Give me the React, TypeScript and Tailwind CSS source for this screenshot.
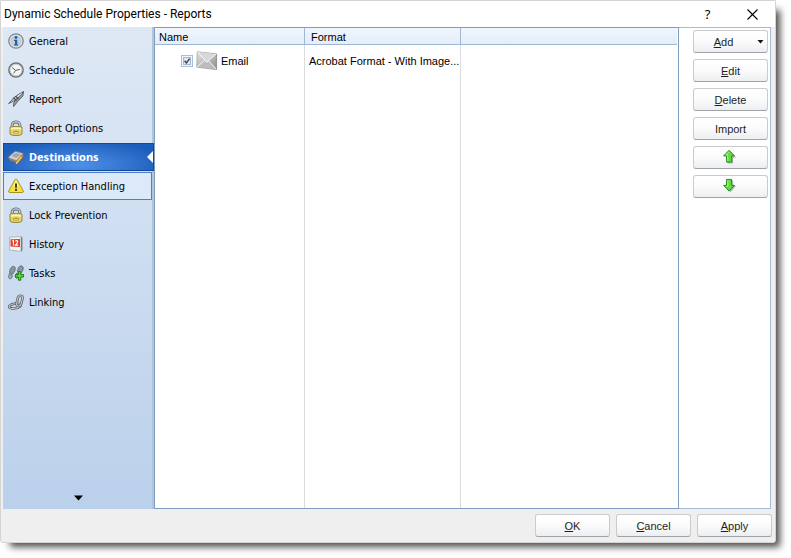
import { useState } from 'react'
import type { ReactNode } from 'react'

type NavItem = {
    id: string
    label: string
    icon: ReactNode
}

function InfoIcon() {
    return (
        <svg width="16" height="16" viewBox="0 0 16 16">
            <circle cx="8" cy="8" r="7.2" fill="#dfe6ec" stroke="#7d8890" strokeWidth="1.3" />
            <circle cx="8" cy="8" r="5.7" fill="#c3ced8" />
            <circle cx="8" cy="4.5" r="1.4" fill="#1d5f9c" />
            <path d="M6 6.8h3.2v4.6h1.1v1.2H5.9v-1.2H7V8H6z" fill="#1d5f9c" />
        </svg>
    )
}

function ClockIcon() {
    return (
        <svg width="16" height="16" viewBox="0 0 16 16">
            <circle cx="8" cy="8" r="7.1" fill="#f6f7f7" stroke="#6d7275" strokeWidth="1.5" />
            <circle cx="8" cy="8" r="5.8" fill="none" stroke="#c5c9cc" />
            <path d="M4.2 5.6L7.6 8.4M7.6 8.4L11.8 7.4M7.6 8.4L5.6 11.4" stroke="#5a5a5a" strokeWidth="1" fill="none" />
        </svg>
    )
}

function PensIcon() {
    return (
        <svg width="16" height="16" viewBox="0 0 16 16">
            <path d="M15.5.6L14.9 5 9.6 10.4 5.6 15.6 5.9 11.4 9 7z" fill="#9aa2a7" stroke="#51585d" strokeWidth=".9" />
            <path d="M15.5.6L11 3 6 6.6.6 12.6 5.8 10 10.8 6.2z" fill="#c5cbcf" stroke="#51585d" strokeWidth=".9" />
            <path d="M5.2 6.6l3.4 3M7.4 5.2l3.2 2.8" stroke="#3b4246" strokeWidth="1.1" />
            <path d="M13.6 2.2l-4 3.4" stroke="#f4f6f7" strokeWidth=".8" />
        </svg>
    )
}

function LockIcon() {
    return (
        <svg width="16" height="16" viewBox="0 0 16 16">
            <path d="M4.2 8V5C4.2 .9 11.8 .9 11.8 5v3" fill="none" stroke="#6b7278" strokeWidth="3" />
            <path d="M4.2 8V5C4.2 .9 11.8 .9 11.8 5v3" fill="none" stroke="#c9ced2" strokeWidth="1.3" />
            <path d="M2 7q6-1.4 12 0v7q-1 1.6-6 1.6T2 14z" fill="#e6d467" stroke="#8d7d35" strokeWidth=".9" />
            <path d="M2.8 7.8q5.2-1.2 10.4 0v2q-5.2-1-10.4 0z" fill="#f8f0b4" />
            <ellipse cx="8" cy="12.2" rx="3" ry="1.6" fill="#b09c42" />
            <path d="M6 12.4q2 1.3 4 0" stroke="#f7edae" fill="none" strokeWidth=".8" />
        </svg>
    )
}

function DriveIcon() {
    return (
        <svg width="16" height="16" viewBox="0 0 16 16">
            <path d="M.5 8.2v2.4q.4.9 1.4 1.3l6 2.2q1 .3 1.8-.5l5.6-5.4V5.4z" fill="#7c7f82" stroke="#55585b" strokeWidth=".6" />
            <path d="M1.2 7.4L6.4 3q.8-.7 1.8-.5l6.2 1.7q1.3.4.5 1.4L9.4 11q-.8.7-1.8.4L1.3 9Q-.1 8.4 1.2 7.4z" fill="#cdcfd1" stroke="#85888b" strokeWidth=".7" />
            <path d="M4.2 6.6l3-2.4q.5-.3 1-.2l3.6 1q.6.3.2.7L9 8.5q-.4.3-1 .2L4.4 7.4q-.6-.3-.2-.8z" fill="#a3a6a9" />
            <path d="M13.6 5.8l1.9 1.5-5 6.2-2.7 1.6.8-3z" fill="#f8c63e" stroke="#a06c18" strokeWidth=".7" />
            <path d="M8.4 12.7l1.4 1.2-2 1.2z" fill="#fbeccb" />
            <path d="M13.6 5.8l1.9 1.5-1 1.2-1.9-1.5z" fill="#d8665a" />
        </svg>
    )
}

function WarningIcon() {
    return (
        <svg width="16" height="16" viewBox="0 0 16 16">
            <path d="M8 1.3q.8 0 1.3.9l5.9 10.6q.7 1.7-1 1.7H1.8q-1.7 0-1-1.7L6.7 2.2Q7.2 1.3 8 1.3z" fill="#f8e13c" stroke="#a8921b" />
            <path d="M8 2.6L4.4 9q3.6-2.2 7.2 0z" fill="#fdf6a6" />
            <path d="M7 5.4h2l-.4 4.8H7.4z" fill="#222" />
            <rect x="7.1" y="11" width="1.8" height="1.8" fill="#222" />
        </svg>
    )
}

function CalendarIcon() {
    return (
        <svg width="16" height="16" viewBox="0 0 16 16">
            <path d="M1.6 1.2L13 .6v14.8L1.6 14z" fill="#f4f5f6" stroke="#a3a8ad" strokeWidth=".8" />
            <path d="M13 .6l1.4.9v12.8L13 15.4z" fill="#777c81" />
            <path d="M2.6 3.2l9.4-.3v8l-9.4-.4z" fill="#df3a26" />
            <path d="M4.3 5.3l1.1-.7v4.8M7.3 5.4q1.6-1.5 2.5 0 0 1-2.5 3.7h3" fill="none" stroke="#fff" strokeWidth="1.1" />
        </svg>
    )
}

function StepsIcon() {
    return (
        <svg width="16" height="16" viewBox="0 0 16 16">
            <path d="M5.8 1.2q2.2.8 1.2 4.2L4.8 9 1.6 7.4Q2 1.5 5.8 1.2z" fill="#8c979f" stroke="#56616a" strokeWidth=".8" />
            <path d="M1.4 8.4l2.9 1.6q-.2 4-2.6 3.9Q-.4 13 1.4 8.4z" fill="#a6b0b7" stroke="#56616a" strokeWidth=".8" />
            <path d="M13.6.8q2.4.8 1.4 4.2L12.8 8.4 9.4 6.8Q9.8 1.1 13.6.8z" fill="#8c979f" stroke="#56616a" strokeWidth=".8" />
            <path d="M8.8 8l2.2 1.4q-.3 4-2.6 4-2-.9.4-5.4z" fill="#a6b0b7" stroke="#56616a" strokeWidth=".8" />
            <path d="M10.4 6.6h2.4v3h3V12h-3v3.2h-2.4V12h-3V9.6h3z" fill="#62d644" stroke="#1c7f12" strokeWidth="1" />
        </svg>
    )
}

function ChainIcon() {
    return (
        <svg width="16" height="16" viewBox="0 0 16 16" fill="none">
            <ellipse cx="6.8" cy="12" rx="5.6" ry="2.3" transform="rotate(-10 6.8 12)" stroke="#5d6368" strokeWidth="2.6" />
            <ellipse cx="6.8" cy="12" rx="5.6" ry="2.3" transform="rotate(-10 6.8 12)" stroke="#c9cdd0" strokeWidth="1" />
            <rect x="9.2" y="1.6" width="4.6" height="10.4" rx="2.3" transform="rotate(14 11.3 7)" stroke="#5d6368" strokeWidth="2.6" />
            <rect x="9.2" y="1.6" width="4.6" height="10.4" rx="2.3" transform="rotate(14 11.3 7)" stroke="#c9cdd0" strokeWidth="1" />
        </svg>
    )
}

function MailIcon() {
    return (
        <svg width="22" height="20" viewBox="0 0 22 20">
            <defs>
                <linearGradient id="mail" x1="0" y1="0" x2="1" y2="1">
                    <stop offset="0" stopColor="#e4e4e4" />
                    <stop offset="1" stopColor="#8f8f92" />
                </linearGradient>
            </defs>
            <path d="M1.2.8l19.2 2v15.8L.8 16.2z" fill="url(#mail)" stroke="#a0a0a2" strokeWidth=".8" />
            <path d="M1.6 1l18.6 2L10.8 11z" fill="#d8d8d9" />
            <path d="M1.2 16l7.6-6.6 2 1.6 1.8-1.3 7.6 8.4z" fill="#bcbcbe" />
            <path d="M1.6 1l9 10.2 9.6-8.2M1.2 16l7.4-6.8M12.6 10l7.6 8" fill="none" stroke="#fafafa" strokeWidth="1" />
            <path d="M20.6 3v15.6" stroke="#8d8d90" strokeWidth=".8" />
        </svg>
    )
}

function ArrowIcon({ down }: { down?: boolean }) {
    return (
        <svg className="mr-[2px] mb-[2px]" width="14" height="16" viewBox="0 0 14 16">
            <path
                d={down ? 'M4.2 2.4h6v5.4h3L7.6 14.6 2 8.6z' : 'M7 2.4l6.2 6.4h-3v5.8H4.6v-6z'}
                fill="#8d9296"
                opacity=".6"
            />
            <path
                d={down ? 'M3.6 1.4h5v6h2.9L6.1 13.1.7 7.4h2.9z' : 'M6.1 1.3l5.5 5.6H8.7v6.2H3.6V6.9H.6z'}
                fill="#5fdd3a"
                stroke="#258a1d"
                strokeWidth="1"
            />
            <path d={down ? 'M4.8 2.4v6h-1.6' : 'M6.1 2.8L2.9 6h1.8v6'} fill="none" stroke="#b6f59b" strokeWidth=".9" />
        </svg>
    )
}

const navItems: NavItem[] = [
    { id: 'general', label: 'General', icon: <InfoIcon /> },
    { id: 'schedule', label: 'Schedule', icon: <ClockIcon /> },
    { id: 'report', label: 'Report', icon: <PensIcon /> },
    { id: 'options', label: 'Report Options', icon: <LockIcon /> },
    { id: 'destinations', label: 'Destinations', icon: <DriveIcon /> },
    { id: 'exception', label: 'Exception Handling', icon: <WarningIcon /> },
    { id: 'lock', label: 'Lock Prevention', icon: <LockIcon /> },
    { id: 'history', label: 'History', icon: <CalendarIcon /> },
    { id: 'tasks', label: 'Tasks', icon: <StepsIcon /> },
    { id: 'linking', label: 'Linking', icon: <ChainIcon /> },
]

type PushButtonProps = {
    children: ReactNode
    label?: string
    onClick?: () => void
}

function PushButton({ children, label, onClick }: PushButtonProps) {
    return (
        <button
            type="button"
            aria-label={label}
            onClick={onClick}
            className="flex h-[23px] w-[75px] shrink-0 items-center justify-center rounded-[3px] border border-[#c9cbce] border-b-[#9fa2a6] bg-linear-to-b from-white via-[#fbfbfc] to-[#eceef1] text-[#1e1e1e]"
        >
            {children}
        </button>
    )
}

export default function App() {
    const [active, setActive] = useState('destinations')
    const [checked, setChecked] = useState(true)

    return (
        <div className="flex min-h-screen bg-white pr-[15px] pb-[15px] font-['Liberation_Sans',Arial,sans-serif] text-[11px] leading-4 text-black">
            <div className="flex flex-1 flex-col rounded-b-[3px] border border-[#d4d4d4] bg-[#efefef] shadow-[7px_7px_7px_-3px_rgba(0,0,0,0.7)]">
                {/* Title bar */}
                <header className="flex h-[26px] items-center bg-white pl-[3px] font-['Roboto','Open_Sans',sans-serif]">
                    <h1 className="flex-1 text-[12px]">Dynamic Schedule Properties - Reports</h1>
                    <button type="button" aria-label="Help" className="w-[45px] font-['Noto_Sans',sans-serif] text-[13px]">?</button>
                    <button type="button" aria-label="Close" className="flex w-[45px] justify-center">
                        <svg width="11" height="11" viewBox="0 0 11 11">
                            <path d="M.5.5l10 10M10.5.5l-10 10" stroke="#000" strokeWidth="1.1" />
                        </svg>
                    </button>
                </header>

                <main className="flex flex-1 pr-[4px] pl-[2px]">
                    {/* Navigation */}
                    <nav className="flex w-[151px] shrink-0 flex-col border-r-2 border-[#b3c5db] bg-linear-to-b from-[#dfe9f5] to-[#bad0eb] font-['DejaVu_Sans_Condensed','Noto_Sans',sans-serif]">
                        {navItems.map((item) => {
                            const isActive = item.id === active
                            return (
                                <button
                                    key={item.id}
                                    type="button"
                                    onClick={() => setActive(item.id)}
                                    className={
                                        isActive
                                            ? 'relative -mr-[2px] mb-px flex h-[28px] items-center gap-[5px] border border-[#14489b] bg-[radial-gradient(ellipse_at_50%_80%,#4f90e8,#1b5dba_85%)] pl-[4px] font-["Noto_Sans",sans-serif] font-bold text-white'
                                            : item.id === 'exception'
                                              ? 'mb-px flex h-[28px] items-center gap-[5px] border border-[#4c7fd0] bg-[#dce9f9] pl-[4px]'
                                              : 'mb-px flex h-[28px] items-center gap-[5px] border border-transparent pl-[4px]'
                                    }
                                >
                                    {item.icon}
                                    <span className={isActive ? 'whitespace-nowrap' : 'pt-[2px] whitespace-nowrap'}>{item.label}</span>
                                    {isActive && (
                                        <svg className="absolute top-[7px] right-0" width="6" height="12" viewBox="0 0 6 12">
                                            <path d="M6 0v12L0 6z" fill="#fff" />
                                        </svg>
                                    )}
                                </button>
                            )
                        })}
                        <button type="button" aria-label="More" className="mt-auto mb-[8px] flex justify-center pl-[2px]">
                            <svg width="9" height="6" viewBox="0 0 9 6">
                                <path d="M0 .5h9L4.5 5.5z" fill="#000" />
                            </svg>
                        </button>
                    </nav>

                    {/* Destinations list */}
                    <section className="flex flex-1 border border-[#7f9dbf] bg-white pr-px">
                        <table className="w-full table-fixed border-separate border-spacing-0 text-left">
                            <colgroup>
                                <col className="w-[150px]" />
                                <col className="w-[156px]" />
                                <col />
                            </colgroup>
                            <thead>
                                <tr className="h-[17px] bg-linear-to-b from-[#f0f6fd] to-[#e3edf9]">
                                    <th className="border-r border-b border-[#9bb8d8] p-0 pt-[2px] pl-[4px] leading-[14px] font-normal">Name</th>
                                    <th className="border-r border-b border-[#9bb8d8] p-0 pt-[2px] pl-[6px] leading-[14px] font-normal">Format</th>
                                    <th className="border-b border-[#9bb8d8] p-0" />
                                </tr>
                            </thead>
                            <tbody>
                                <tr className="h-[31px]">
                                    <td className="border-r border-[#dcdcdc] p-0">
                                        <label className="flex items-center pl-[26px]">
                                            <span className="grid">
                                                <input
                                                    type="checkbox"
                                                    checked={checked}
                                                    onChange={(e) => setChecked(e.target.checked)}
                                                    className="col-start-1 row-start-1 size-[12px] appearance-none border border-[#a5c0e2] bg-[#f1f6fc]"
                                                />
                                                <svg className="pointer-events-none col-start-1 row-start-1" width="12" height="12" viewBox="0 0 12 12">
                                                    <rect x="2.5" y="2.5" width="7" height="7" fill="#e6e9ee" stroke="#aeb6c2" />
                                                    {checked && <path d="M3.6 5.8l1.8 2.2 3.2-4.4" fill="none" stroke="#34517f" strokeWidth="1.6" />}
                                                </svg>
                                            </span>
                                            <span className="mr-[3px] ml-[3px]"><MailIcon /></span>
                                            Email
                                        </label>
                                    </td>
                                    <td className="truncate border-r border-[#dcdcdc] p-0 pl-[4px]">Acrobat Format - With Image...</td>
                                    <td className="p-0" />
                                </tr>
                                <tr>
                                    <td className="border-r border-[#dcdcdc]" />
                                    <td className="border-r border-[#dcdcdc]" />
                                    <td />
                                </tr>
                            </tbody>
                        </table>
                    </section>

                    {/* List actions */}
                    <aside className="flex shrink-0 flex-col gap-[6px] border border-l-0 border-[#a3bbd6] bg-white pt-[2px] pr-[2px] pl-[14px]">
                        <PushButton>
                            <span className="flex-1 pr-[4px]"><u>A</u>dd</span>
                            <svg className="mr-[3px]" width="7" height="4" viewBox="0 0 7 4">
                                <path d="M.5 0h6l-3 3.5z" fill="#111" />
                            </svg>
                        </PushButton>
                        <PushButton><span><u>E</u>dit</span></PushButton>
                        <PushButton><span><u>D</u>elete</span></PushButton>
                        <PushButton>Import</PushButton>
                        <PushButton label="Move up"><ArrowIcon /></PushButton>
                        <PushButton label="Move down"><ArrowIcon down /></PushButton>
                    </aside>
                </main>

                <footer className="flex h-[33px] items-center justify-end gap-[6px] pr-[3px]">
                    <PushButton><span><u>O</u>K</span></PushButton>
                    <PushButton><span><u>C</u>ancel</span></PushButton>
                    <PushButton><span><u>A</u>pply</span></PushButton>
                </footer>
            </div>
        </div>
    )
}
